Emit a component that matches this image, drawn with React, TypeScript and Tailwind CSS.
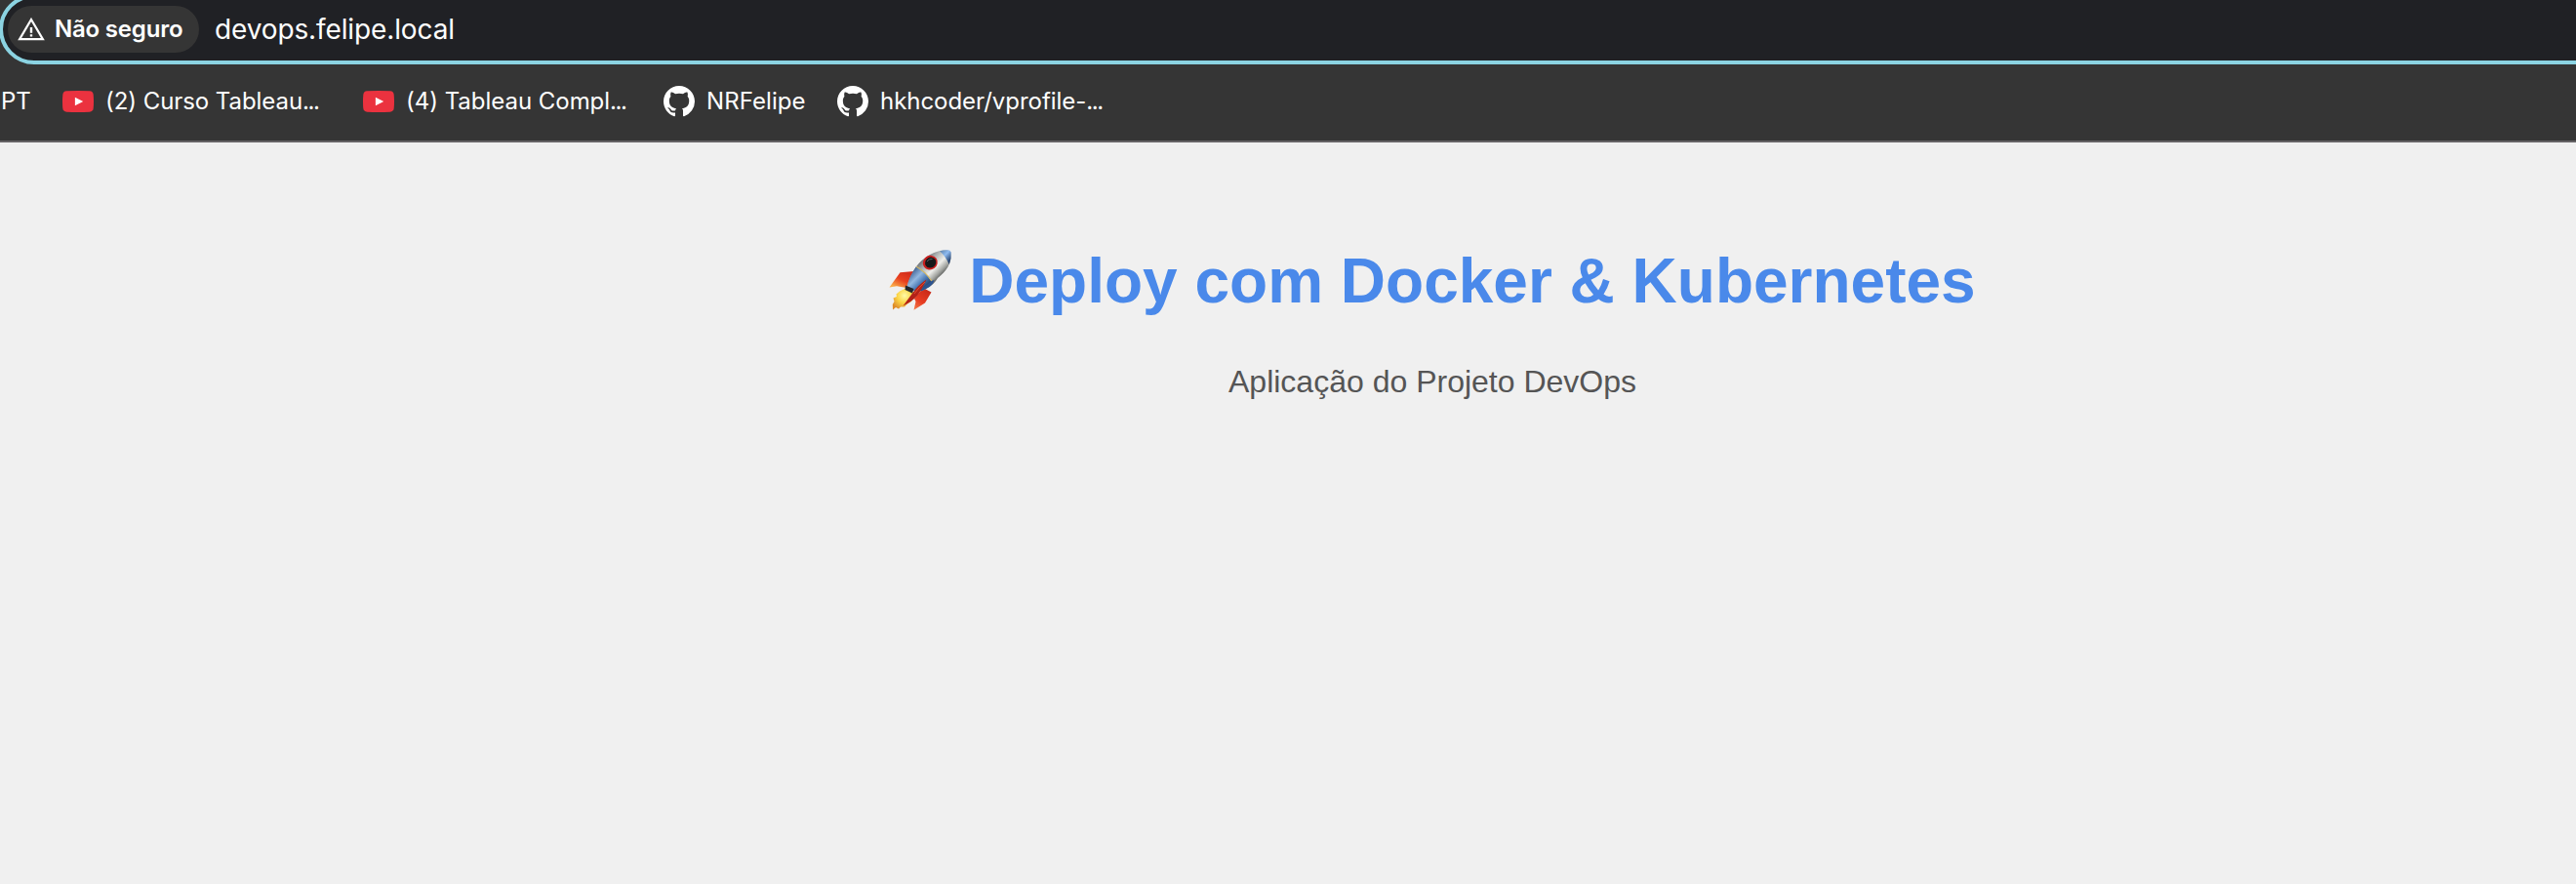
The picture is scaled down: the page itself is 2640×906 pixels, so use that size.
import React from "react";

function YouTubeIcon() {
  return (
    <svg viewBox="0 0 32 32" className="h-8 w-8 shrink-0">
      <path d="M4.2 5.3Q16 4.7 27.8 5.3Q31.3 5.6 31.7 9Q32.3 16 31.7 23Q31.3 26.4 27.8 26.7Q16 27.3 4.2 26.7Q.7 26.4.3 23Q-.3 16 .3 9Q.7 5.600 4.200 5.300Z" fill="#eb323f" />
      <path d="M12.900 11.800V20.300L21.200 16Z" fill="#fff" />
    </svg>
  );
}

function GitHubIcon() {
  return (
    <svg viewBox="0 0 16 16" className="h-8 w-8 shrink-0" fill="#fff">
      <path d="M8 0C3.58 0 0 3.58 0 8c0 3.54 2.29 6.53 5.47 7.59.4.07.55-.17.55-.38 0-.19-.01-.82-.01-1.490-2.010.37-2.530-.49-2.690-.94-.09-.23-.48-.94-.82-1.130-.28-.15-.68-.52-.01-.53.63-.01 1.080.58 1.230.82.72 1.210 1.870.87 2.330.66.07-.52.28-.87.51-1.070-1.780-.2-3.640-.89-3.640-3.950 0-.87.31-1.590.82-2.150-.08-.2-.36-1.020.08-2.120 0 0 .67-.21 2.200.82.64-.18 1.320-.27 2-.27s1.360.09 2 .27c1.530-1.040 2.200-.82 2.200-.82.44 1.100.16 1.920.08 2.120.51.56.82 1.270.82 2.150 0 3.070-1.870 3.750-3.650 3.950.29.25.54.73.54 1.480 0 1.070-.01 1.930-.01 2.200 0 .21.15.46.55.38A8.010 8.010 0 0 0 16 8c0-4.420-3.580-8-8-8Z" />
    </svg>
  );
}

function WarningIcon() {
  return (
    <svg viewBox="0 0 28 24" className="h-6 w-7 shrink-0">
      <path d="M14 2L25.900 22.200H2.100Z" fill="none" stroke="#fff" strokeWidth="2.200" />
      <path d="M14 10V15.700M14 17.300V19.600" stroke="#fff" strokeWidth="2.400" />
    </svg>
  );
}

function Rocket() {
  return (
    <svg viewBox="0 0 64 64" className="h-16 w-16 shrink-0 overflow-visible" role="img" aria-label="🚀">
      <defs>
        <linearGradient id="hull" x1="34" y1="10" x2="52" y2="28" gradientUnits="userSpaceOnUse">
          <stop offset="0" stopColor="#6c7176" />
          <stop offset=".25" stopColor="#a9adae" />
          <stop offset=".6" stopColor="#eeeeea" />
          <stop offset=".85" stopColor="#a3a5a1" />
          <stop offset="1" stopColor="#646664" />
        </linearGradient>
        <linearGradient id="blue" x1="22" y1="24" x2="38" y2="40" gradientUnits="userSpaceOnUse">
          <stop offset="0" stopColor="#47699a" />
          <stop offset=".35" stopColor="#93b8e0" />
          <stop offset=".65" stopColor="#4a79b4" />
          <stop offset="1" stopColor="#22395d" />
        </linearGradient>
        <linearGradient id="nose" x1="53" y1="1" x2="63" y2="11" gradientUnits="userSpaceOnUse">
          <stop offset="0" stopColor="#6388b0" />
          <stop offset=".45" stopColor="#8dbaf0" />
          <stop offset="1" stopColor="#213d68" />
        </linearGradient>
        <linearGradient id="finA" x1="18" y1="22" x2="9" y2="40" gradientUnits="userSpaceOnUse">
          <stop offset="0" stopColor="#d22b1a" />
          <stop offset=".5" stopColor="#e8401f" />
          <stop offset="1" stopColor="#fbb04a" />
        </linearGradient>
        <linearGradient id="finB" x1="42" y1="42" x2="28" y2="62" gradientUnits="userSpaceOnUse">
          <stop offset="0" stopColor="#c72a19" />
          <stop offset=".6" stopColor="#e83d22" />
          <stop offset="1" stopColor="#f27a48" />
        </linearGradient>
        <radialGradient id="flame" cx="16" cy="47" r="15" gradientUnits="userSpaceOnUse">
          <stop offset="0" stopColor="#fffaa8" />
          <stop offset=".5" stopColor="#fbd545" />
          <stop offset="1" stopColor="#dd8a2a" />
        </radialGradient>
      </defs>
      <path d="M26 22L11.500 23.300L.5 38.500L8 37.300L18 39L23 30Z" fill="url(#finA)" />
      <path d="M35 39L43.500 43.500L37 54.500L25.500 61.800L27.500 53L26 50L31 44Z" fill="url(#finB)" />
      <path d="M17 39.500L11 42.500L7.500 45.500L8 48L4.500 49.500L5.500 53L3.800 56L4 61.500L7 59L10 60.500L12 58.500L16 58.500L19 55.500L23 53L27.500 44Z" fill="url(#flame)" />
      <path d="M28 17.300C36 7 47 .5 60 .3Q63 .3 63.700 2.500C64.500 14 59 22 50 29Q46 36 38 40Q33 43.500 27 42.500L18.500 38Q21 27 28 17.300Z" fill="url(#hull)" />
      <path d="M28 17.300Q37 22 43.500 32.500Q37 40 27 43L18.500 38Q21 27 28 17.300Z" fill="url(#blue)" />
      <path d="M43.500 32L46.500 31Q45 37 38 40Q33 43 29 42.500Q37 38.500 43.500 32Z" fill="#2b5390" />
      <path d="M52 1.200Q57 0 60 .3Q63 .3 63.700 2.500Q64.200 9 61.800 15Q58 6.500 52 1.200Z" fill="url(#nose)" />
      <path d="M28 17.300Q37 22 43.800 32" stroke="#d3b65d" strokeWidth="1.100" fill="none" />
      <ellipse cx="42.300" cy="13.200" rx="7.700" ry="7.200" transform="rotate(-35 42.300 13.200)" fill="#c81f1f" />
      <ellipse cx="42.700" cy="13.100" rx="5.800" ry="5.300" transform="rotate(-35 42.700 13.100)" fill="#161819" />
      <path d="M39 12Q41 9 44.500 9.500" stroke="#5b6166" strokeWidth="1" fill="none" />
      <path d="M17 36.500L25.500 40L24 44.500L16.500 41Z" fill="#23262b" />
      <path d="M38.500 30.500Q30 36 24.500 44Q20 50 14.500 57.500Q24 53 29 47Q33 42 38.500 30.500Z" fill="#b32118" />
      <path d="M37 33Q31 38 26 45" stroke="#ec5a31" strokeWidth=".8" fill="none" />
    </svg>
  );
}

const bookmarks = [
  { name: "(2) Curso Tableau", dots: true, icon: "yt", box: "ml-8 w-[264px] tracking-[-0.06px]" },
  { name: "(4) Tableau Compl", dots: true, icon: "yt", box: "ml-[44px] w-[264px] tracking-[-0.03px]" },
  { name: "NRFelipe", dots: false, icon: "gh", box: "ml-11 w-[146px] tracking-[0.08px]" },
  { name: "hkhcoder/vprofile-", dots: true, icon: "gh", box: "ml-8 w-[280px] tracking-[-0.04px]" },
];

export default function App() {
  return (
    <div className="flex h-[906px] w-[2640px] flex-col overflow-hidden bg-[#f0f0f0] font-['Inter',sans-serif] text-white">
      <header className="h-[146px] shrink-0 border-b-2 border-[#656365] bg-[#353535]">
        <div className="-mt-1.5 -ml-px flex h-[72px] w-[2720px] items-center rounded-full border-4 border-[#8bd3e2] bg-[#202125] pl-[5px]">
          <div className="flex h-12 w-[196px] shrink-0 items-center rounded-full bg-[#353535] pl-[10px]">
            <WarningIcon />
            <span className="ml-2.5 text-[24px] leading-[48px] font-semibold tracking-[-0.2px] whitespace-nowrap">Não seguro</span>
          </div>
          <span className="ml-4 text-[28px] leading-[48px] tracking-[-0.12px] whitespace-nowrap">devops.felipe.local</span>
        </div>
        <nav className="mt-[22px] flex h-8 items-center text-[24px] leading-8 whitespace-nowrap">
          <span className="w-8 shrink-0 pl-px">PT</span>
          {bookmarks.map((b) => (
            <a key={b.name} className={`flex shrink-0 items-center gap-3 ${b.box}`}>
              {b.icon === "yt" ? <YouTubeIcon /> : <GitHubIcon />}
              <span>
                {b.name}
                {b.dots && <span className="tracking-[-1.4px]">...</span>}
              </span>
            </a>
          ))}
        </nav>
      </header>
      <main className="flex flex-1 flex-col items-center pt-[105px] pl-[296px] font-['Liberation_Sans',Arial,sans-serif]">
        <h1 className="flex h-[74px] items-center gap-[18px] text-[64px] leading-[74px] font-bold text-[#4a89ea]">
          <Rocket />
          <span className="whitespace-nowrap">Deploy com Docker &amp; Kubernetes</span>
        </h1>
        <p className="mt-12 text-[32px] leading-[37px] text-[#555]">Aplicação do Projeto DevOps</p>
      </main>
    </div>
  );
}
